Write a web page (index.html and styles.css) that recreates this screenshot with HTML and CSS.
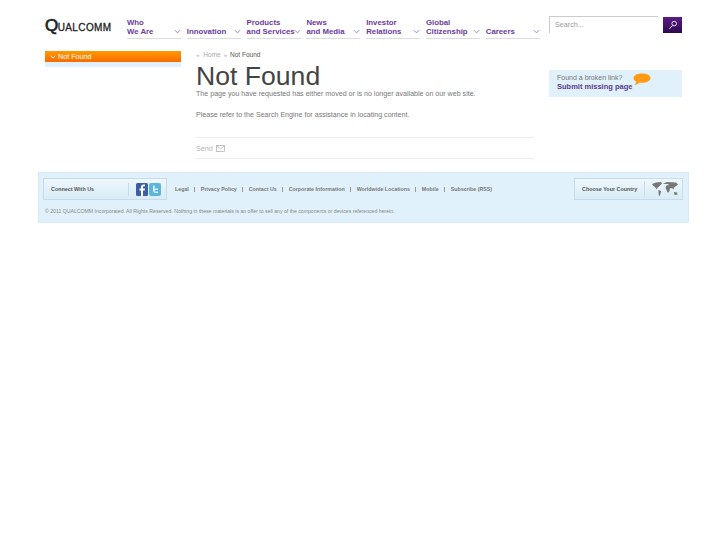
FILE: index.html
```html
<!DOCTYPE html>
<html lang="en">
<head>
  <meta charset="UTF-8" />
  <title>Not Found</title>
  <link rel="stylesheet" href="styles.css">
</head>
<body>
  <div class="page">
    <div class="header">
      <a class="logo"><span class="logo-q">Q</span>UALCOMM</a>
      <ul class="nav">
        <li><a>Who<br>We Are</a><svg class="chev" viewBox="0 0 8 5"><path d="M1 1l3 3 3-3"/></svg></li>
        <li><a>Innovation</a><svg class="chev" viewBox="0 0 8 5"><path d="M1 1l3 3 3-3"/></svg></li>
        <li><a>Products<br>and Services</a><svg class="chev" viewBox="0 0 8 5"><path d="M1 1l3 3 3-3"/></svg></li>
        <li><a>News<br>and Media</a><svg class="chev" viewBox="0 0 8 5"><path d="M1 1l3 3 3-3"/></svg></li>
        <li><a>Investor<br>Relations</a><svg class="chev" viewBox="0 0 8 5"><path d="M1 1l3 3 3-3"/></svg></li>
        <li><a>Global<br>Citizenship</a><svg class="chev" viewBox="0 0 8 5"><path d="M1 1l3 3 3-3"/></svg></li>
        <li><a>Careers</a><svg class="chev" viewBox="0 0 8 5"><path d="M1 1l3 3 3-3"/></svg></li>
      </ul>
      <div class="search">
        <div class="search-box">Search...</div>
        <div class="search-btn">
          <svg viewBox="0 0 10 10" width="10" height="10"><circle cx="6.2" cy="3.6" r="2.3"/><path d="M4.6 5.3L1.5 8.8"/></svg>
        </div>
      </div>
    </div>

    <div class="content">
      <div class="sidebar">
        <div class="side-active"><svg class="side-chev" viewBox="0 0 6 4"><path d="M.8.8L3 3 5.2.8"/></svg>Not Found</div>
        <div class="side-sub"></div>
      </div>

      <div class="main">
        <div class="crumbs">
          <span class="sep">»</span><a>Home</a><span class="sep">»</span><span class="crumb-now">Not Found</span>
        </div>
        <h1>Not Found</h1>
        <p>The page you have requested has either moved or is no longer available on our web site.</p>
        <p>Please refer to the Search Engine for assistance in locating content.</p>
        <div class="send">Send
          <svg viewBox="0 0 9 7" width="9" height="7"><rect x=".5" y=".5" width="8" height="6"/><path d="M.5.5l4 3.5 4-3.5"/></svg>
        </div>
      </div>

      <div class="aside">
        <div class="broken">
          <div>Found a broken link?</div>
          <a>Submit missing page</a>
          <svg class="bubble" viewBox="0 0 18 14" width="18" height="14"><path d="M9 0.5c4.700 0 8.500 1.800 8.500 4.500S13.700 9.800 9 9.800c-.9 0-1.700-.1-2.500-.2C5.300 11 3.500 11.800 1.500 12c1-.8 1.700-2 1.800-3.400C1.500 7.800.5 6.500.5 5 .5 2.300 4.300.5 9 .5z"/></svg>
        </div>
      </div>
    </div>

    <div class="footer">
      <div class="foot-top">
        <div class="connect">
          <span class="connect-label">Connect With Us</span>
          <span class="social">
            <svg class="icon" viewBox="0 0 12 13"><rect width="12" height="13" rx="1.500" fill="#3b5ea6"/><path d="M7 13V7.500h1.700l.3-2H7V4.300c0-.6.2-1 1-1h1V1.500H7.600C5.800 1.500 5 2.500 5 4v1.500H3.500v2H5V13z" fill="#fff"/></svg>
            <svg class="icon" viewBox="0 0 12 13"><rect width="12" height="13" rx="2" fill="#5cb6dc"/><path d="M4 2.500v5c0 1.600 1 2.500 2.500 2.500H9V8.500H6.700C6 8.500 5.700 8 5.700 7.500V7H9V5.500H5.700v-3z" fill="#d8f0fa"/></svg>
          </span>
        </div>
        <ul class="foot-links">
          <li>Legal</li>
          <li>Privacy Policy</li>
          <li>Contact Us</li>
          <li>Corporate Information</li>
          <li>Worldwide Locations</li>
          <li>Mobile</li>
          <li>Subscribe (RSS)</li>
        </ul>
        <div class="country">
          <span class="country-label">Choose Your Country</span>
          <svg class="map" viewBox="0 0 28 16" width="28" height="16"><path d="M1 3l4-1.500L10 1l1 1.500-2 2-1.500 1.500-1 .5-.5 2L4 6 2 4.500zM7.500 9l2.500 1-.5 3-1.500 2.500L7.500 12zM12 3l4-2 9 .5 2 2-2.500 2-1.500 1-.5 2-1.500-1.500-1 .5-1-.5-.5 3-1.500 2-1.500-3-1-2.500 1-2 3-.5-2.500-1zM23 11l3 .5.500 2-3 .5z"/></svg>
        </div>
      </div>
      <div class="copyright">© 2011 QUALCOMM Incorporated. All Rights Reserved. Nothing in these materials is an offer to sell any of the components or devices referenced herein.</div>
    </div>
  </div>
</body>
</html>
```

FILE: styles.css
```css
body {
  margin: 0;
  font-family: "Liberation Sans", Arial, sans-serif;
  background-color: #fff;
  color: #666;
}

ul {
  list-style: none;
  margin: 0;
  padding: 0;
}

.page {
  width: 651px;
  margin-left: 38px;
}

/* Header */
.header {
  display: flex;
  height: 51px;
  padding: 16px 7px 0;
  box-sizing: border-box;
}

.logo {
  flex: none;
  width: 82px;
  margin-top: 1px;
  font-size: 10px;
  line-height: 17px;
  letter-spacing: 0.4px;
  color: #222;
  -webkit-text-stroke: 0.3px #222;
  white-space: nowrap;
}

.logo-q {
  margin-right: -1px;
  font-size: 17px;
  -webkit-text-stroke: 0.7px #222;
}

.nav {
  display: flex;
  flex: none;
  gap: 5.8px;
  width: 412px;
  height: 23px;
}

.nav li {
  position: relative;
  flex: 0 0 54px;
  height: 22px;
  border-bottom: 1px solid #ddd;
  font-size: 7.8px;
  font-weight: bold;
  line-height: 9px;
  color: #6b3a9e;
  display: flex;
  align-items: flex-end;
  white-space: nowrap;
}

.nav li a {
  padding-bottom: 2px;
}

.chev {
  position: absolute;
  right: 0;
  bottom: 4px;
  width: 7px;
  height: 5px;
  fill: none;
  stroke: #8d75b0;
  stroke-width: 1;
}

.search {
  display: flex;
  flex: none;
  margin-left: 10px;
  gap: 5px;
}

.search-box {
  width: 103px;
  height: 16px;
  padding-left: 5px;
  border-top: 1px solid #ccc;
  border-left: 1px solid #ccc;
  font-size: 7.2px;
  line-height: 15px;
  color: #999;
}

.search-btn {
  display: flex;
  align-items: center;
  justify-content: center;
  width: 19px;
  height: 16px;
  margin-top: 1px;
  background: linear-gradient(#5a1d86, #2c0a4c);
}

.search-btn svg {
  fill: none;
  stroke: #e8def0;
  stroke-width: 1;
}

/* Content */
.content {
  display: flex;
  height: 105px;
  padding: 0 7px;
}

.sidebar {
  width: 136px;
  margin-right: 15px;
}

.side-active {
  display: flex;
  align-items: center;
  height: 11px;
  padding-left: 5px;
  background: linear-gradient(#ff9a00, #fb6a00);
  font-size: 7.2px;
  color: #fff;
}

.side-chev {
  width: 6px;
  height: 4px;
  margin-right: 2px;
  fill: none;
  stroke: #fff;
  stroke-width: 1;
}

.side-sub {
  height: 5px;
  background-color: #e0f1fb;
}

.main {
  width: 338px;
}

.crumbs {
  font-size: 6.5px;
  line-height: 8px;
  margin-bottom: 4px;
  color: #aaa;
}

.sep {
  margin-right: 4px;
  font-size: 6px;
}

.crumbs a {
  margin-right: 3px;
}

.crumb-now {
  color: #555;
  margin-left: -1px;
}

h1 {
  margin: 0 0 2px;
  font-size: 26.6px;
  font-weight: normal;
  line-height: 26px;
  color: #444;
}

.main p {
  margin: 0 0 13.5px;
  font-size: 7.1px;
  line-height: 7.5px;
  color: #777;
}

.send {
  display: flex;
  align-items: center;
  gap: 3px;
  height: 20px;
  margin-top: 17.5px;
  border-top: 1px solid #eee;
  border-bottom: 1px solid #eee;
  font-size: 7.2px;
  color: #b5b5b5;
}

.send svg {
  fill: none;
  stroke: #aaa;
  stroke-width: 0.7;
}

.aside {
  margin-left: 15px;
  padding-top: 19px;
}

.broken {
  position: relative;
  width: 125px;
  height: 23px;
  padding: 4px 0 0 8px;
  background-color: #e0f1fb;
  font-size: 7px;
  line-height: 8.5px;
  color: #777;
}

.broken a {
  font-size: 7.5px;
  font-weight: bold;
  color: #5a3a8e;
}

.bubble {
  position: absolute;
  left: 84px;
  top: 3px;
  fill: #ff9a14;
}

/* Footer */
.footer {
  height: 51px;
  padding: 5px 5px 0 4px;
  box-sizing: border-box;
  background-color: #e0f1fb;
  border: 1px solid #d8eaf5;
  margin-top: 16px;
}

.foot-top {
  display: flex;
  align-items: center;
}

.connect,
.country {
  display: flex;
  flex: none;
  align-items: center;
  height: 22px;
  box-sizing: border-box;
  background: linear-gradient(#eef7fc, #d8ecf7);
  border: 1px solid #c8dce8;
  font-size: 5.4px;
  font-weight: bold;
  color: #555;
}

.connect {
  width: 124px;
  padding-left: 7px;
}

.connect-label {
  width: 77px;
}

.social {
  display: flex;
  gap: 1px;
  padding-left: 7px;
  border-left: 1px solid #c8dce8;
}

.icon {
  width: 12px;
  height: 13px;
}

.foot-links {
  display: flex;
  flex: 1;
  padding-left: 8px;
  font-size: 5.3px;
  font-weight: bold;
  color: #777;
  white-space: nowrap;
}

.foot-links li + li {
  margin-left: 5.5px;
  padding-left: 6.5px;
  background: linear-gradient(#999, #999) left center / 1px 5px no-repeat;
}

.country {
  width: 109px;
  padding-left: 7px;
}

.country-label {
  width: 62px;
  white-space: nowrap;
}

.map {
  padding-left: 6px;
  border-left: 1px solid #c8dce8;
  fill: #777;
}

.copyright {
  margin: 7px 0 0 2px;
  font-size: 5.17px;
  line-height: 8px;
  color: #888;
  white-space: nowrap;
}
```
